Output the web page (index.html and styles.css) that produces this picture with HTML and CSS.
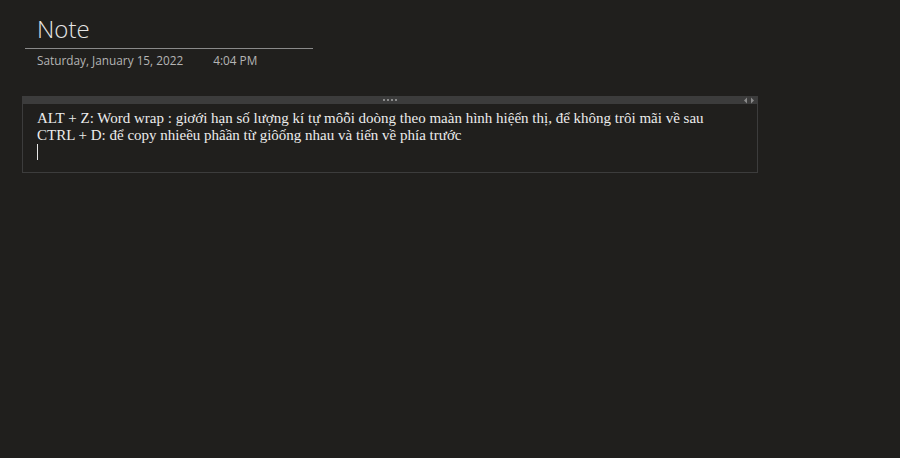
FILE: index.html
```html
<!DOCTYPE html>
<html>
<head>
<meta charset="utf-8">
<link rel="stylesheet" href="styles.css">
</head>
<body>
<div class="page">
  <header class="head">
    <h1 class="title">Note</h1>
    <div class="meta"><span class="date">Saturday, January 15, 2022</span><span class="time">4:04 PM</span></div>
  </header>
  <section class="note">
    <div class="bar">
      <span class="grip"><i></i><i></i><i></i><i></i></span>
      <svg class="arrows" width="12" height="7" viewBox="0 0 12 7"><path d="M4 0.5 L1 3.5 L4 6.5 Z" fill="#8a8a8a"/><path d="M8 0.5 L11 3.5 L8 6.5 Z" fill="#8a8a8a"/></svg>
    </div>
    <div class="body">
      <p>ALT + Z: Word wrap : giơới hạn số lượng kí tự môỗi doòng theo maàn hình hiệển thị, để không trôi mãi về sau</p>
      <p>CTRL + D: để copy nhieều phâần từ giôống nhau và tiến về phía trước</p>
      <p><span class="caret"></span></p>
    </div>
  </section>
</div>
</body>
</html>
```
FILE: styles.css
```css
html, body {
  margin: 0;
  padding: 0;
  background: #201f1d;
  width: 900px;
  height: 458px;
  overflow: hidden;
}
.page {
  padding: 14px 0 0 22px;
}
.head {
  width: 288px;
  margin-left: 3px;
}
.title {
  margin: 0;
  padding: 0 0 4px 12px;
  font-family: "Open Sans", sans-serif;
  font-weight: 300;
  font-size: 24px;
  line-height: 30px;
  color: #e6e6e6;
  border-bottom: 1px solid #8a8a8a;
}
.meta {
  display: flex;
  padding: 3px 0 0 12px;
  font-family: "Open Sans", sans-serif;
  font-size: 11.8px;
  line-height: 16px;
  color: #b4b4b4;
}
.time {
  margin-left: 30px;
}
.note {
  margin-top: 28px;
  width: 734px;
  border: 1px solid #3c3c3c;
  border-top: none;
}
.bar {
  height: 8px;
  background: #3c3c3c;
  position: relative;
  display: flex;
  justify-content: center;
  align-items: center;
}
.grip {
  display: flex;
  gap: 2px;
}
.grip i {
  width: 2px;
  height: 2px;
  background: #8a8a8a;
}
.arrows {
  position: absolute;
  right: 2px;
  top: 1px;
}
.body {
  padding: 6px 0 12px 14px;
  height: 50px;
  font-family: "Liberation Serif", "Times New Roman", serif;
  font-size: 15px;
  line-height: 17px;
  color: #ececec;
}
.body p {
  margin: 0;
}
.caret {
  display: inline-block;
  width: 1px;
  height: 16px;
  background: #e6e6e6;
  vertical-align: -3px;
}
```
